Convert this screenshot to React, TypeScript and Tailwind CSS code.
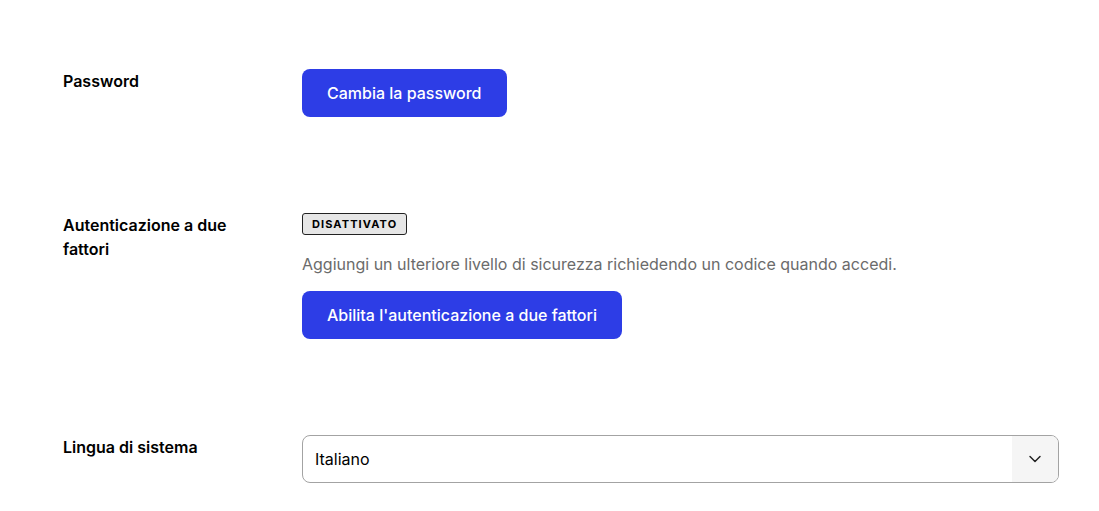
import { ChevronDown } from "lucide-react";

const Row = ({ label, children }: { label: string; children: React.ReactNode }) => {
  return (
    <div className="flex py-12">
      <div className="w-[239px] shrink-0 pr-10 text-base font-semibold leading-6 text-black">
        {label}
      </div>
      <div className="flex-1">{children}</div>
    </div>
  );
};

const App = () => {
  return (
    <div
      className="h-screen overflow-hidden bg-white px-[63px] pt-[21px] text-black"
      style={{ fontFamily: "Inter, 'Noto Sans', sans-serif" }}
    >
      <div className="w-[996px]">
        <Row label="Password">
          <button className="h-12 rounded-lg bg-[#2d3de6] px-[25px] text-base font-medium text-white">
            Cambia la password
          </button>
        </Row>

        <Row label="Autenticazione a due fattori">
          <div className="w-fit rounded-[3px] border border-[#222] bg-[#e6e6e6] px-[9px] py-[3px] text-[11px] font-bold leading-[14px] tracking-[0.1em] text-black">
            DISATTIVATO
          </div>
          <p className="mt-[17px] text-base leading-6 text-[#6b6b6b]">
            Aggiungi un ulteriore livello di sicurezza richiedendo un codice quando accedi.
          </p>
          <button className="mt-[15px] h-12 rounded-lg bg-[#2d3de6] px-[25px] text-base font-medium text-white">
            Abilita l'autenticazione a due fattori
          </button>
        </Row>

        <Row label="Lingua di sistema">
          <div className="flex h-12 w-[757px] overflow-hidden rounded-lg border border-[#a3a3a3]">
            <div className="flex flex-1 items-center px-3 text-base text-black">Italiano</div>
            <div className="flex w-[46px] items-center justify-center bg-[#f5f5f5]">
              <ChevronDown className="h-5 w-5 text-[#222]" strokeWidth={1.75} />
            </div>
          </div>
        </Row>
      </div>
    </div>
  );
};

export default App;
